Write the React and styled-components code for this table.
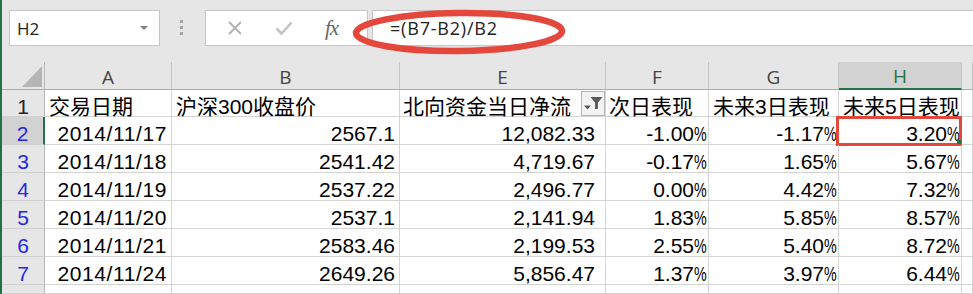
import React from "react";
import styled, { createGlobalStyle } from "styled-components";

const GlobalStyle = createGlobalStyle`
  html, body {
    margin: 0;
    padding: 0;
    background: #fff;
    overflow: hidden;
  }
  * {
    box-sizing: border-box;
  }
`;

const Window = styled.div`
  position: relative;
  width: 973px;
  height: 294px;
  display: flex;
  flex-direction: column;
  border-left: 2px solid #217346;
  overflow: hidden;
  background: #fff;
`;

const FormulaBar = styled.div`
  flex: none;
  height: 62px;
  display: flex;
  align-items: flex-start;
  padding: 10px 0 0 7px;
  background: #e6e6e6;
`;

const NameBox = styled.div`
  width: 151px;
  height: 36px;
  display: flex;
  align-items: center;
  justify-content: space-between;
  padding: 0 11px 0 7px;
  background: #fff;
  border: 1px solid #c6c6c6;
  font-family: "Open Sans", "Noto Sans", sans-serif;
  font-size: 17px;
  color: #222;
`;

const Caret = styled.span`
  width: 0;
  height: 0;
  border-left: 4px solid transparent;
  border-right: 4px solid transparent;
  border-top: 4px solid #808080;
`;

const Grip = styled.div`
  display: flex;
  flex-direction: column;
  gap: 3px;
  margin: 10px 0 0 20px;

  span {
    width: 3px;
    height: 3px;
    background: #a6a6a6;
  }
`;

const FxGroup = styled.div`
  width: 163px;
  height: 36px;
  margin-left: 22px;
  display: flex;
  align-items: center;
  padding-left: 21px;
  background: #fff;
  border: 1px solid #c6c6c6;
`;

const ToolIcon = styled.svg`
  flex: none;
  margin-right: ${(p) => p.$gap}px;
`;

const Fx = styled.span`
  font-family: "Liberation Serif", "DejaVu Serif", serif;
  font-style: italic;
  font-size: 21px;
  color: #666;
  letter-spacing: -1px;
`;

const FormulaInput = styled.div`
  flex: 1;
  height: 36px;
  margin-left: 4px;
  display: flex;
  align-items: center;
  padding-left: 17px;
  background: #fff;
  border: 1px solid #c6c6c6;
  border-right: none;
  font-family: "Open Sans", "Noto Sans", sans-serif;
  font-size: 18px;
  letter-spacing: 0.8px;
  color: #222;
`;

const Ellipse = styled.svg`
  position: absolute;
  left: 346px;
  top: 5px;
  pointer-events: none;
`;

const Sheet = styled.div`
  flex: 1;
  display: grid;
  grid-template-columns: 43px 127px 228px 206px 103px 130px 123px 1fr;
  grid-template-rows: 28px 27px repeat(6, 28px) 1fr;
  font-family: "Liberation Sans", "Noto Sans CJK SC", sans-serif;
  font-size: 21px;
  color: #000;
`;

const Corner = styled.div`
  display: flex;
  align-items: flex-end;
  justify-content: flex-end;
  padding: 0 2px 2px 0;
  background: #e6e6e6;
  border-right: 1px solid #b9b9b9;
  border-bottom: 1px solid #ababab;
`;

const ColHeader = styled.div`
  display: flex;
  align-items: center;
  justify-content: center;
  padding-top: 2px;
  background: ${(p) => (p.$selected ? "#d2d2d2" : "#e6e6e6")};
  border-right: 1px solid #c6c6c6;
  border-bottom: ${(p) => (p.$selected ? "2px solid #217346" : "1px solid #ababab")};
  font-family: "Open Sans", "Noto Sans", sans-serif;
  font-size: 19px;
  color: ${(p) => (p.$selected ? "#217346" : "#444")};
`;

const RowHeader = styled.div`
  text-align: center;
  line-height: 20px;
  padding-top: 7px;
  background: ${(p) => (p.$selected ? "#d2d2d2" : "#e6e6e6")};
  border-right: ${(p) => (p.$selected ? "2px solid #217346" : "1px solid #b9b9b9")};
  border-bottom: 1px solid #d0d0d0;
  color: ${(p) => (p.$blue ? "#2626e6" : "#222")};
`;

const Cell = styled.div`
  position: relative;
  line-height: 20px;
  padding: 7px ${(p) => p.$pr ?? 4}px 0 ${(p) => p.$pl ?? 4}px;
  text-align: ${(p) => p.$align || "right"};
  letter-spacing: ${(p) => p.$spacing ?? 0}px;
  white-space: nowrap;
  border-right: 1px solid #d4d4d4;
  border-bottom: 1px solid #d4d4d4;
`;

const Pct = styled.span`
  display: inline-block;
  width: 13px;
  text-align: left;
  transform: scaleX(0.68);
  transform-origin: left center;
`;

const FilterButton = styled.div`
  position: absolute;
  right: 0;
  top: 1px;
  width: 24px;
  height: 25px;
  display: flex;
  align-items: center;
  justify-content: center;
  background: #f3f3f3;
  border: 1px solid #b4b4b4;
`;

const Marker = styled.div`
  position: absolute;
  left: -3px;
  top: -1px;
  right: -1px;
  bottom: -2px;
  border: 3px solid #e4473b;
  pointer-events: none;

  &::after {
    content: "";
    position: absolute;
    right: -2px;
    bottom: -1px;
    width: 4px;
    height: 4px;
    background: #217346;
  }
`;

const columns = ["A", "B", "E", "F", "G", "H"];
const titles = ["交易日期", "沪深300收盘价", "北向资金当日净流", "次日表现", "未来3日表现", "未来5日表现"];
const titlePad = [4, 4, 3, 3, 4, 4];

const rows = [
  ["2014/11/17", "2567.1", "12,082.33", "-1.00", "-1.17", "3.20"],
  ["2014/11/18", "2541.42", "4,719.67", "-0.17", "1.65", "5.67"],
  ["2014/11/19", "2537.22", "2,496.77", "0.00", "4.42", "7.32"],
  ["2014/11/20", "2537.1", "2,141.94", "1.83", "5.85", "8.57"],
  ["2014/11/21", "2583.46", "2,199.53", "2.55", "5.40", "8.72"],
  ["2014/11/24", "2649.26", "5,856.47", "1.37", "3.97", "6.44"],
];

const FunnelIcon = () => (
  <svg width="22" height="20" viewBox="0 0 22 20">
    <path d="M2 11.5h7l-3.5 4z" fill="#595959" />
    <path d="M8.5 3h12l-4.6 5.8V15h-2.8V8.8z" fill="#595959" />
  </svg>
);

export default function App() {
  return (
    <>
      <GlobalStyle />
      <Window>
        <FormulaBar>
          <NameBox>
            H2
            <Caret />
          </NameBox>
          <Grip>
            <span />
            <span />
            <span />
          </Grip>
          <FxGroup>
            <ToolIcon width="16" height="16" viewBox="0 0 16 16" $gap={32}>
              <path d="M2 2l12 12M14 2L2 14" stroke="#b4b4b4" strokeWidth="2" />
            </ToolIcon>
            <ToolIcon width="18" height="16" viewBox="0 0 18 16" $gap={32}>
              <path d="M1.5 8.5l5 5L16.5 2.5" stroke="#c4c4c4" strokeWidth="2.6" fill="none" />
            </ToolIcon>
            <Fx>fx</Fx>
          </FxGroup>
          <FormulaInput>=(B7-B2)/B2</FormulaInput>
        </FormulaBar>

        <Ellipse width="222" height="54" viewBox="0 0 222 54">
          <ellipse
            cx="111"
            cy="27"
            rx="103"
            ry="19"
            fill="none"
            stroke="#e4473b"
            strokeWidth="6.5"
            transform="rotate(-0.6 111 27)"
          />
        </Ellipse>

        <Sheet>
          <Corner>
            <svg width="20" height="21" viewBox="0 0 20 21">
              <path d="M20 0V21H0z" fill="#b5b5b5" />
            </svg>
          </Corner>
          {columns.map((c) => (
            <ColHeader key={c} $selected={c === "H"}>
              {c}
            </ColHeader>
          ))}
          <ColHeader />

          <RowHeader>1</RowHeader>
          {titles.map((t, i) => (
            <Cell key={t} $align="left" $pl={titlePad[i]}>
              {t}
              {i === 2 && (
                <FilterButton>
                  <FunnelIcon />
                </FilterButton>
              )}
            </Cell>
          ))}
          <Cell />

          {rows.map((r, ri) => (
            <React.Fragment key={r[0]}>
              <RowHeader $blue $selected={ri === 0}>
                {ri + 2}
              </RowHeader>
              <Cell $spacing={0.6}>{r[0]}</Cell>
              <Cell>{r[1]}</Cell>
              <Cell $pr={10}>{r[2]}</Cell>
              {r.slice(3).map((v, vi) => (
                <Cell key={vi} $pr={1}>
                  {v}
                  <Pct>%</Pct>
                  {ri === 0 && vi === 2 && <Marker />}
                </Cell>
              ))}
              <Cell />
            </React.Fragment>
          ))}

          <RowHeader />
          {columns.map((c) => (
            <Cell key={c} />
          ))}
          <Cell />
        </Sheet>
      </Window>
    </>
  );
}
